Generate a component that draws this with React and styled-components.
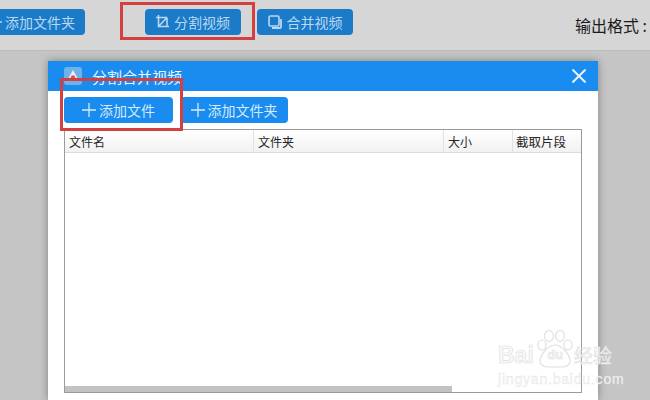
import React from 'react';
import styled, { createGlobalStyle } from 'styled-components';

const GlobalStyle = createGlobalStyle`
  html, body {
    margin: 0;
    padding: 0;
    background: #c4c4c4;
  }
  * {
    box-sizing: border-box;
  }
`;

const Page = styled.div`
  position: relative;
  width: 650px;
  height: 400px;
  overflow: hidden;
  background: #c5c5c5;
  font-family: "Noto Sans CJK SC", "Liberation Sans", sans-serif;
`;

const Toolbar = styled.div`
  height: 51px;
  background: #d6d6d6;
  border-bottom: 1px solid #bcbcbc;
  display: flex;
  align-items: flex-start;
  padding-top: 9px;
  margin-left: -22px;
  width: 672px;
`;

const ToolButton = styled.div`
  width: ${(p) => p.$width}px;
  height: 26px;
  margin-left: ${(p) => p.$gap || 0}px;
  flex-shrink: 0;
  display: flex;
  align-items: center;
  justify-content: center;
  gap: ${(p) => p.$iconGap || 4}px;
  border-radius: 4px;
  background: #1b7bc9;
  color: #b9d8f0;
  font-size: 14px;
`;

const FormatLabel = styled.div`
  margin-left: auto;
  margin-top: 5px;
  width: 75px;
  font-size: 16px;
  line-height: 22px;
  white-space: nowrap;
  color: #1c1c1c;
`;

const Dialog = styled.div`
  position: absolute;
  left: 48px;
  top: 61px;
  width: 550px;
  height: 339px;
  background: #fff;
  box-shadow: 0 0 8px rgba(0, 0, 0, 0.35);
`;

const TitleBar = styled.div`
  height: 30px;
  background: #1a8cf0;
  display: flex;
  align-items: center;
  padding: 0 12px 0 16px;
`;

const AppIcon = styled.div`
  width: 18px;
  height: 18px;
  border-radius: 3px;
  background: #6fb2ea;
  display: flex;
  align-items: center;
  justify-content: center;
`;

const Title = styled.div`
  margin-left: 10px;
  font-size: 15px;
  color: #eef6fd;
  flex: 1;
`;

const DialogBody = styled.div`
  padding: 6px 16px 7px 16px;
  display: flex;
  flex-direction: column;
  height: 309px;
`;

const ButtonRow = styled.div`
  display: flex;
  gap: 7px;
  margin-bottom: 6px;
`;

const AddButton = styled.div`
  width: ${(p) => p.$width}px;
  height: 26px;
  border-radius: 4px;
  background: #1a8cf0;
  color: #d5eafc;
  font-size: 14px;
  display: flex;
  align-items: center;
  justify-content: center;
  gap: 3px;
`;

const Table = styled.div`
  flex: 1;
  border: 1px solid #9a9a9a;
  display: flex;
  flex-direction: column;
  justify-content: space-between;
`;

const HeaderRow = styled.div`
  height: 23px;
  display: grid;
  grid-template-columns: 189px 190px 69px 1fr;
  background: linear-gradient(#ffffff, #f1f1f1);
  border-bottom: 1px solid #dcdcdc;
`;

const HeaderCell = styled.div`
  padding-left: ${(p) => p.$pad || 4}px;
  font-size: ${(p) => p.$size || 12}px;
  line-height: 23px;
  white-space: nowrap;
  color: #262626;
  border-right: 1px solid #e2e2e2;
  &:last-child {
    border-right: 0;
  }
`;

const ScrollTrack = styled.div`
  height: 6px;
  background: #fff;
`;

const ScrollThumb = styled.div`
  width: 387px;
  height: 100%;
  background: #c2c2c2;
`;

const RedFrame = styled.div`
  position: absolute;
  left: ${(p) => p.$x}px;
  top: ${(p) => p.$y}px;
  width: ${(p) => p.$w}px;
  height: ${(p) => p.$h}px;
  border: 3px solid #d2403f;
`;

const Watermark = styled.div`
  position: absolute;
  left: 498px;
  top: 330px;
  width: 118px;
  height: 56px;
  color: #f8f8f8;
  -webkit-text-stroke: 0.6px #e0e0e0;
  font-family: "Liberation Sans", sans-serif;
  display: flex;
  flex-direction: column;
  justify-content: flex-end;
`;

const WatermarkBrand = styled.div`
  display: flex;
  align-items: center;
  height: 24px;
  font-size: 23px;
  line-height: 24px;
  font-weight: 700;
  white-space: nowrap;
`;

const WatermarkDu = styled.span`
  width: 37px;
  margin-left: 3px;
  font-size: 13px;
  text-align: center;
`;

const WatermarkCn = styled.span`
  font-size: 19px;
  font-family: "Noto Sans CJK SC", sans-serif;
  font-weight: 400;
`;

const WatermarkUrl = styled.div`
  margin-top: 5px;
  font-size: 14px;
  line-height: 14px;
  letter-spacing: 0.8px;
  -webkit-text-stroke: 0.3px #e0e0e0;
  white-space: nowrap;
`;

const Paw = styled.svg`
  position: absolute;
  left: 39px;
  top: 0;
`;

const PlusIcon = ({ size = 14 }) => (
  <svg width={size} height={size} viewBox="0 0 14 14" fill="none" stroke="currentColor" strokeWidth="1.3">
    <path d="M7 0v14M0 7h14" />
  </svg>
);

const CloseIcon = () => (
  <svg width="14" height="14" viewBox="0 0 14 14" fill="none" stroke="#e8f4fe" strokeWidth="2">
    <path d="M0.5 0.5l13 13M13.5 0.5l-13 13" />
  </svg>
);

const CropIcon = () => (
  <svg width="13" height="14" viewBox="0 0 13 14" fill="none" stroke="#b9d8f0" strokeWidth="1.6">
    <path d="M0 2.5h11M2.5 0v11.5H13M11 2.5v9M2.5 11.5l8.5-9" />
  </svg>
);

const CombineIcon = () => (
  <svg width="14" height="14" viewBox="0 0 14 14" fill="none" stroke="#b9d8f0">
    <rect x="1" y="1" width="10" height="10" rx="1.5" strokeWidth="1.6" />
    <path d="M13 4v8a1 1 0 0 1-1 1H4" strokeWidth="1.8" />
  </svg>
);

const LogoIcon = () => (
  <svg width="14" height="14" viewBox="0 0 14 14">
    <path d="M7 1l6 11H1z" fill="#eef3f8" />
    <circle cx="7" cy="8.5" r="2.2" fill="#d9524f" />
  </svg>
);

const App = () => {
  return (
    <Page>
      <GlobalStyle />
      <Toolbar>
        <ToolButton $width={107} $iconGap={3}>
          <PlusIcon />
          <span>添加文件夹</span>
        </ToolButton>
        <ToolButton $width={96} $gap={60} $iconGap={5}>
          <CropIcon />
          <span>分割视频</span>
        </ToolButton>
        <ToolButton $width={96} $gap={16} $iconGap={5}>
          <CombineIcon />
          <span>合并视频</span>
        </ToolButton>
        <FormatLabel>输出格式 :</FormatLabel>
      </Toolbar>

      <Dialog>
        <TitleBar>
          <AppIcon>
            <LogoIcon />
          </AppIcon>
          <Title>分割合并视频</Title>
          <CloseIcon />
        </TitleBar>
        <DialogBody>
          <ButtonRow>
            <AddButton $width={109}>
              <PlusIcon />
              <span>添加文件</span>
            </AddButton>
            <AddButton $width={108}>
              <PlusIcon />
              <span>添加文件夹</span>
            </AddButton>
          </ButtonRow>
          <Table>
            <HeaderRow>
              <HeaderCell>文件名</HeaderCell>
              <HeaderCell>文件夹</HeaderCell>
              <HeaderCell>大小</HeaderCell>
              <HeaderCell $pad={3} $size={12.5}>截取片段</HeaderCell>
            </HeaderRow>
            <ScrollTrack>
              <ScrollThumb />
            </ScrollTrack>
          </Table>
        </DialogBody>
      </Dialog>

      <RedFrame $x={120} $y={2} $w={135} $h={38} />
      <RedFrame $x={60} $y={78} $w={123} $h={53} />

      <Watermark>
        <Paw width="36" height="38" viewBox="0 0 36 38" fill="none" stroke="#e0e0e0" strokeWidth="1.2">
          <ellipse cx="5" cy="15" rx="4" ry="5" />
          <ellipse cx="12" cy="6" rx="4.5" ry="5.5" />
          <ellipse cx="23" cy="6" rx="4.5" ry="5.5" />
          <ellipse cx="31" cy="15" rx="4" ry="5" />
          <path d="M18 15c-7 0-15 10-15 16 0 4 4 6 8 6h14c4 0 8-2 8-6 0-6-8-16-15-16z" />
        </Paw>
        <WatermarkBrand>
          Bai<WatermarkDu>du</WatermarkDu><WatermarkCn>经验</WatermarkCn>
        </WatermarkBrand>
        <WatermarkUrl>jingyan.baidu.com</WatermarkUrl>
      </Watermark>
    </Page>
  );
};

export default App;
